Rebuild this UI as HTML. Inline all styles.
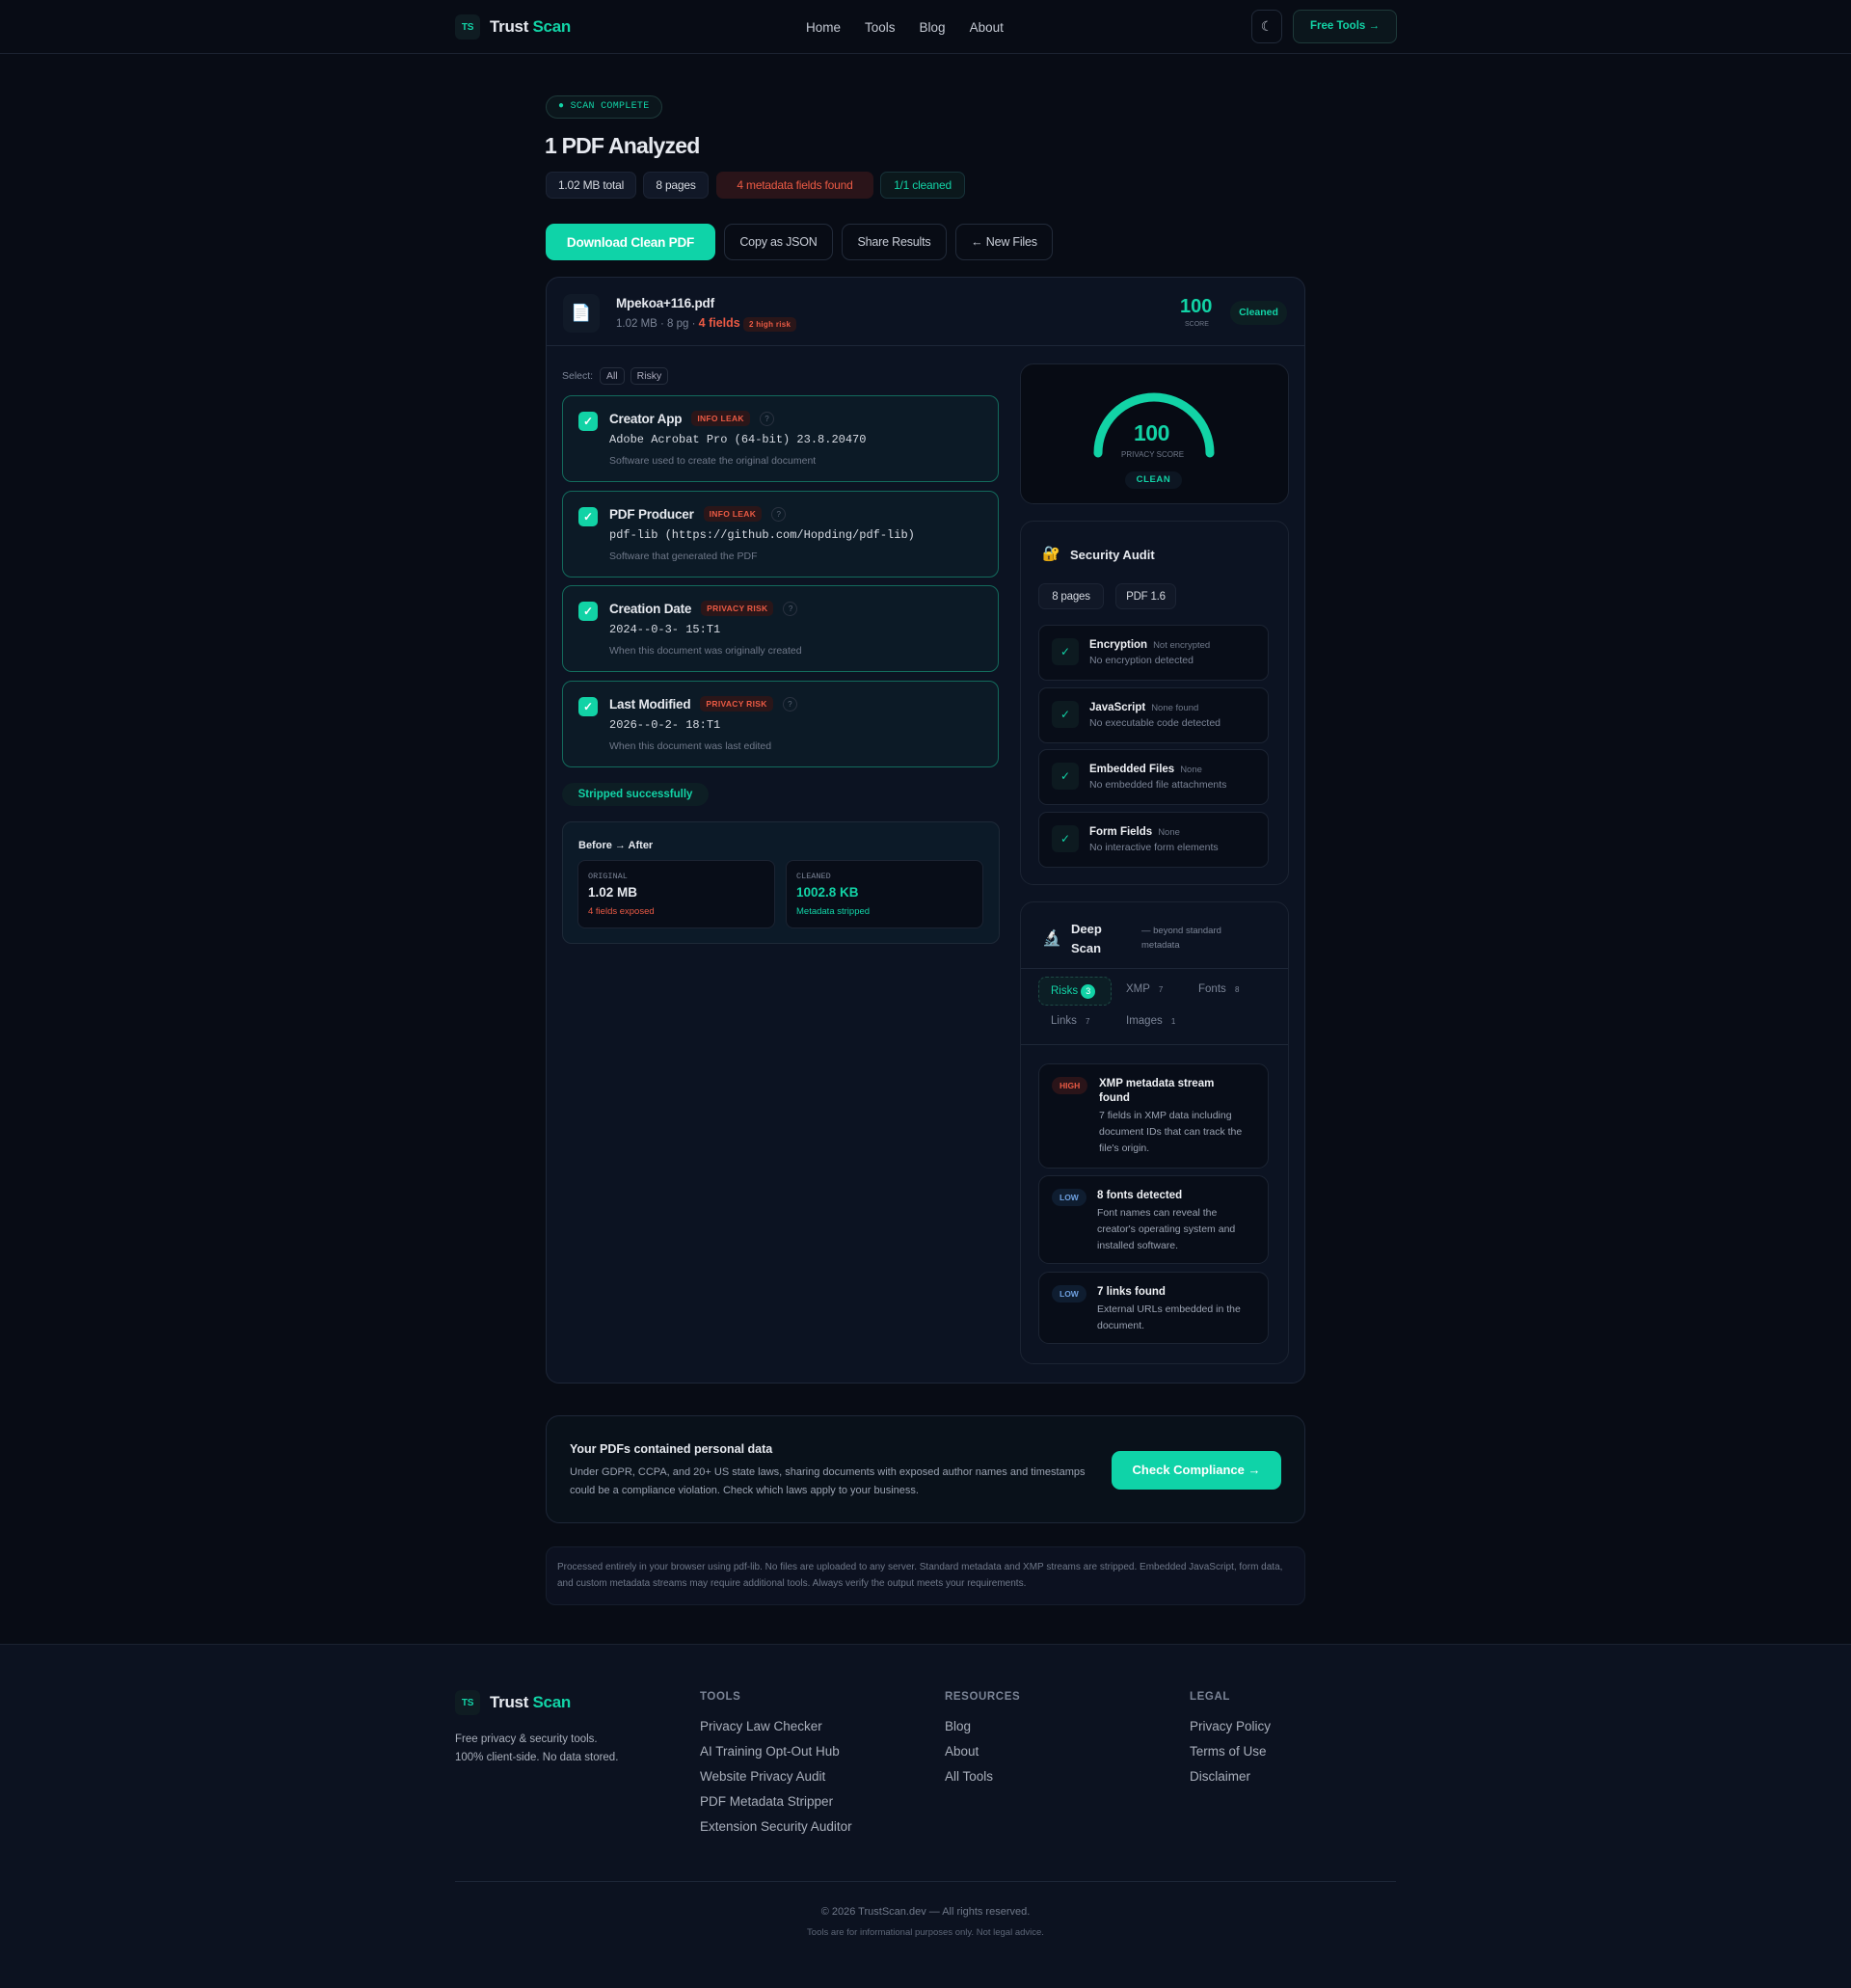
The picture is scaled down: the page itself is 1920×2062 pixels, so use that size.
<!DOCTYPE html>
<html><head><meta charset="utf-8">
<style>
*{box-sizing:border-box;margin:0;padding:0}
body{width:1920px;height:2062px;background:#080c15;font-family:"Liberation Sans",sans-serif;color:#e6e9ef;position:relative;overflow:hidden}
.a{position:absolute}
.g{color:#12d3a6}.r{color:#ea5a44}.m{color:#7b8496}
.mono{font-family:"Liberation Mono",monospace}
.hdr{left:0;top:0;width:1920px;height:56px;border-bottom:1px solid #1b2230}
.logo{display:flex;align-items:center;gap:10px;font-weight:700;font-size:17px;letter-spacing:-.3px}
.ts{width:26px;height:26px;border-radius:6px;background:#0f1c22;color:#12d3a6;font-size:10px;display:flex;align-items:center;justify-content:center;font-weight:700}
.nav a{color:#c3c8d2;font-size:13.5px;margin-right:25px;text-decoration:none}
.chip{position:absolute;height:28px;border-radius:7px;background:#111827;border:1px solid #1c2434;font-size:12px;display:flex;align-items:center;justify-content:center;color:#d5d9e0;letter-spacing:-.2px}
.btn{position:absolute;height:38px;border-radius:9px;border:1px solid #222b3a;font-size:12.5px;display:flex;align-items:center;justify-content:center;color:#c9ced8;letter-spacing:-.2px}
.card{position:absolute;background:#0c1322;border:1px solid #1e2738;border-radius:14px}
.fc{position:absolute;left:583px;width:453px;height:90px;border:1px solid #136a5c;border-radius:10px;background:#0c1a26}
.cb{position:absolute;left:16px;top:16px;width:20px;height:20px;border-radius:5px;background:#12d3a6;color:#fff;font-size:12px;text-align:center;line-height:20px;font-weight:700}
.ft{position:absolute;left:48px;top:15px;font-weight:700;font-size:13.5px;display:flex;align-items:center;gap:10px;letter-spacing:-.2px}
.tag{font-size:8.5px;font-weight:700;color:#ea5a44;background:#2a1619;border-radius:5px;padding:3px 6px;letter-spacing:.3px}
.q{width:15px;height:15px;border-radius:50%;border:1px solid #2a3240;font-size:8px;color:#5b6475;text-align:center;line-height:13px;font-weight:400}
.fv{position:absolute;left:48px;top:38px;font-family:"Liberation Mono",monospace;font-size:12px;color:#d6dae2}
.fd{position:absolute;left:48px;top:61px;font-size:10.5px;color:#6f7889}
.ai{position:absolute;left:1077px;width:239px;height:58px;border:1px solid #1c2433;border-radius:9px;background:#080d18}
.ai .ck{position:absolute;left:13px;top:13px;width:28px;height:28px;border-radius:6px;background:#0d1a20;color:#12d3a6;font-size:12px;text-align:center;line-height:28px}
.ai .t{position:absolute;left:52px;top:14px;font-size:11.5px;font-weight:700;color:#eef0f4}
.ai .t span{font-weight:400;font-size:9.5px;color:#6f7889;margin-left:6px}
.ai .d{position:absolute;left:52px;top:30px;font-size:10.5px;color:#7b8496}
.ri{position:absolute;left:1077px;width:239px;border:1px solid #1c2433;border-radius:11px;background:#080d18}
.lv{position:absolute;left:13px;top:13px;font-size:8.5px;font-weight:700;border-radius:9px;padding:4px 8px}
.ri .t{position:absolute;left:62px;top:13px;width:160px;font-size:11.5px;font-weight:700;line-height:15px;color:#eef0f4}
.ri .d{font-weight:400;font-size:10.5px;line-height:17px;color:#9aa2b1;display:block;margin-top:2px}
.fh{position:absolute;top:1754px;font-size:11.5px;font-weight:700;color:#7b8496;letter-spacing:.6px}
.fl{position:absolute;font-size:13.5px;color:#a9afbb}
</style></head><body>

<div class="a hdr"></div>
<div class="a logo" style="left:472px;top:15px"><div class="ts">TS</div><span>Trust <span class="g">Scan</span></span></div>
<div class="a nav" style="left:836px;top:20px"><a>Home</a><a>Tools</a><a>Blog</a><a>About</a></div>
<div class="a" style="left:1298px;top:10px;width:32px;height:35px;border:1px solid #222b3a;border-radius:8px;color:#c3c8d2;font-size:14px;text-align:center;line-height:33px">☾</div>
<div class="a" style="left:1341px;top:10px;width:108px;height:35px;border:1px solid #1e3a3a;border-radius:8px;background:#0b161c;color:#12d3a6;font-size:11.5px;font-weight:700;text-align:center;line-height:33px">Free Tools →</div>

<div class="a mono" style="left:566px;top:99px;height:24px;border:1px solid #1e3a3a;border-radius:12px;background:#0b161c;color:#12d3a6;font-size:10px;padding:0 12px;line-height:22px;letter-spacing:.3px">● SCAN COMPLETE</div>
<div class="a" style="left:565px;top:138px;font-size:23px;font-weight:700;letter-spacing:-.8px">1 PDF Analyzed</div>
<div class="chip" style="left:566px;top:178px;width:94px">1.02 MB total</div>
<div class="chip" style="left:667px;top:178px;width:68px">8 pages</div>
<div class="chip" style="left:743px;top:178px;width:163px;background:#2a1419;border-color:#2a1419;color:#ea5a44">4 metadata fields found</div>
<div class="chip" style="left:913px;top:178px;width:88px;background:#0b181c;border-color:#17333a;color:#12d3a6">1/1 cleaned</div>

<div class="btn" style="left:566px;top:232px;width:176px;background:#0fd3a8;border-color:#0fd3a8;color:#fff;font-weight:700;font-size:13.5px">Download Clean PDF</div>
<div class="btn" style="left:751px;top:232px;width:113px">Copy as JSON</div>
<div class="btn" style="left:873px;top:232px;width:109px">Share Results</div>
<div class="btn" style="left:991px;top:232px;width:101px">← New Files</div>

<div class="card" style="left:566px;top:287px;width:788px;height:1148px"></div>
<div class="a" style="left:567px;top:358px;width:786px;height:1px;background:#1e2738"></div>
<div class="a" style="left:584px;top:305px;width:38px;height:40px;border-radius:8px;background:#111a28;text-align:center;line-height:40px;font-size:17px;color:#ddd">📄</div>
<div class="a" style="left:639px;top:307px;font-size:13.5px;font-weight:700;letter-spacing:-.2px">Mpekoa+116.pdf</div>
<div class="a m" style="left:639px;top:328px;font-size:11.5px">1.02 MB · 8 pg · <span class="r" style="font-weight:700;font-size:12.5px">4 fields</span> <span class="tag" style="font-size:8px">2 high risk</span></div>
<div class="a g" style="left:1224px;top:307px;font-size:20px;font-weight:700">100</div>
<div class="a" style="left:1229px;top:333px;font-size:7px;color:#6f7889">SCORE</div>
<div class="a" style="left:1276px;top:312px;width:59px;height:25px;border-radius:12px;background:#0d1e22;color:#12d3a6;font-size:10.5px;font-weight:700;text-align:center;line-height:25px">Cleaned</div>

<div class="a m" style="left:583px;top:381px;font-size:10.5px">Select: <span style="display:inline-block;border:1px solid #262e3d;border-radius:5px;padding:2px 6px;margin-left:4px;color:#aab">All</span> <span style="display:inline-block;border:1px solid #262e3d;border-radius:5px;padding:2px 6px;margin-left:3px;color:#aab">Risky</span></div>

<div class="fc" style="top:410px"><div class="cb">✓</div><div class="ft">Creator App <span class="tag">INFO LEAK</span><span class="q">?</span></div><div class="fv">Adobe Acrobat Pro (64-bit) 23.8.20470</div><div class="fd">Software used to create the original document</div></div>
<div class="fc" style="top:509px"><div class="cb">✓</div><div class="ft">PDF Producer <span class="tag">INFO LEAK</span><span class="q">?</span></div><div class="fv">pdf-lib (https://github.com/Hopding/pdf-lib)</div><div class="fd">Software that generated the PDF</div></div>
<div class="fc" style="top:607px"><div class="cb">✓</div><div class="ft">Creation Date <span class="tag">PRIVACY RISK</span><span class="q">?</span></div><div class="fv">2024--0-3- 15:T1</div><div class="fd">When this document was originally created</div></div>
<div class="fc" style="top:706px"><div class="cb">✓</div><div class="ft">Last Modified <span class="tag">PRIVACY RISK</span><span class="q">?</span></div><div class="fv">2026--0-2- 18:T1</div><div class="fd">When this document was last edited</div></div>

<div class="a g" style="left:583px;top:812px;width:152px;height:24px;border-radius:12px;background:#0d1e24;font-size:11.5px;font-weight:700;text-align:center;line-height:24px">Stripped successfully</div>
<div class="a" style="left:583px;top:852px;width:454px;height:127px;border:1px solid #1e2a38;border-radius:10px;background:#0c1a28"></div>
<div class="a" style="left:600px;top:871px;font-size:11px;font-weight:700">Before → After</div>
<div class="a" style="left:599px;top:892px;width:205px;height:71px;border:1px solid #1c2433;border-radius:8px;background:#080d18"></div>
<div class="a" style="left:815px;top:892px;width:205px;height:71px;border:1px solid #1c2433;border-radius:8px;background:#080d18"></div>
<div class="a mono m" style="left:610px;top:904px;font-size:8.5px">ORIGINAL</div>
<div class="a" style="left:610px;top:918px;font-size:13.5px;font-weight:700">1.02 MB</div>
<div class="a r" style="left:610px;top:940px;font-size:9.5px">4 fields exposed</div>
<div class="a mono m" style="left:826px;top:904px;font-size:8.5px">CLEANED</div>
<div class="a g" style="left:826px;top:918px;font-size:13.5px;font-weight:700">1002.8 KB</div>
<div class="a g" style="left:826px;top:940px;font-size:9.5px">Metadata stripped</div>

<div class="a" style="left:1058px;top:377px;width:279px;height:146px;border:1px solid #1c2433;border-radius:14px;background:#070b14"></div>
<svg class="a" style="left:1130px;top:405px" width="134" height="72" viewBox="0 0 134 72"><path d="M9 65 A58 58 0 0 1 125 65" fill="none" stroke="#12d3a6" stroke-width="9" stroke-linecap="round"/></svg>
<div class="a g" style="left:1176px;top:436px;font-size:23px;font-weight:700;letter-spacing:-.5px">100</div>
<div class="a" style="left:1163px;top:467px;font-size:8px;color:#6f7889">PRIVACY SCORE</div>
<div class="a g" style="left:1167px;top:489px;width:59px;height:18px;border-radius:9px;background:#0d1622;font-size:9.5px;font-weight:700;text-align:center;line-height:18px;letter-spacing:.6px">CLEAN</div>

<div class="a" style="left:1058px;top:540px;width:279px;height:378px;border:1px solid #1c2433;border-radius:14px;background:#0c1322"></div>
<div class="a" style="left:1081px;top:565px;font-size:15px">🔐</div>
<div class="a" style="left:1110px;top:568px;font-size:13px;font-weight:700">Security Audit</div>
<div class="chip" style="left:1077px;top:605px;height:27px;width:68px;font-size:11.5px">8 pages</div>
<div class="chip" style="left:1157px;top:605px;height:27px;width:63px;font-size:11.5px">PDF 1.6</div>
<div class="ai" style="top:648px"><div class="ck">✓</div><div class="t">Encryption<span>Not encrypted</span></div><div class="d">No encryption detected</div></div>
<div class="ai" style="top:713px"><div class="ck">✓</div><div class="t">JavaScript<span>None found</span></div><div class="d">No executable code detected</div></div>
<div class="ai" style="top:777px"><div class="ck">✓</div><div class="t">Embedded Files<span>None</span></div><div class="d">No embedded file attachments</div></div>
<div class="ai" style="top:842px"><div class="ck">✓</div><div class="t">Form Fields<span>None</span></div><div class="d">No interactive form elements</div></div>

<div class="a" style="left:1058px;top:935px;width:279px;height:480px;border:1px solid #1c2433;border-radius:14px;background:#0c1322"></div>
<div class="a" style="left:1081px;top:963px;font-size:16px">🔬</div>
<div class="a" style="left:1111px;top:954px;font-size:13px;font-weight:700;line-height:20px">Deep<br>Scan</div>
<div class="a m" style="left:1184px;top:958px;font-size:9.5px;line-height:15px">— beyond standard<br>metadata</div>
<div class="a" style="left:1059px;top:1004px;width:277px;height:1px;background:#1e2738"></div>
<div class="a g" style="left:1077px;top:1013px;width:76px;height:30px;border:1px dashed #1e4a45;border-radius:8px;background:#0c1e25;font-size:11.5px;line-height:28px;padding-left:12px">Risks <span style="display:inline-block;width:15px;height:15px;border-radius:50%;background:#12d3a6;color:#fff;font-size:9px;text-align:center;line-height:15px">3</span></div>
<div class="a m" style="left:1168px;top:1020px;font-size:11.5px">XMP <span style="font-size:8px;margin-left:6px">7</span></div>
<div class="a m" style="left:1243px;top:1020px;font-size:11.5px">Fonts <span style="font-size:8px;margin-left:6px">8</span></div>
<div class="a m" style="left:1090px;top:1053px;font-size:11.5px">Links <span style="font-size:8px;margin-left:6px">7</span></div>
<div class="a m" style="left:1168px;top:1053px;font-size:11.5px">Images <span style="font-size:8px;margin-left:6px">1</span></div>
<div class="a" style="left:1059px;top:1083px;width:277px;height:1px;background:#1e2738"></div>
<div class="ri" style="top:1103px;height:109px"><div class="lv" style="color:#ea5a44;background:#2a1419">HIGH</div><div class="t" style="width:150px">XMP metadata stream found<span class="d">7 fields in XMP data including document IDs that can track the file's origin.</span></div></div>
<div class="ri" style="top:1219px;height:92px"><div class="lv" style="color:#6ea0e0;background:#0f1d30">LOW</div><div class="t" style="left:60px">8 fonts detected<span class="d">Font names can reveal the creator's operating system and installed software.</span></div></div>
<div class="ri" style="top:1319px;height:75px"><div class="lv" style="color:#6ea0e0;background:#0f1d30">LOW</div><div class="t" style="left:60px">7 links found<span class="d">External URLs embedded in the document.</span></div></div>

<div class="a" style="left:566px;top:1468px;width:788px;height:112px;border:1px solid #1e2738;border-radius:14px;background:#09111a"></div>
<div class="a" style="left:591px;top:1496px;font-size:12.5px;font-weight:700">Your PDFs contained personal data</div>
<div class="a" style="left:591px;top:1518px;font-size:11px;line-height:19px;color:#9aa2b1;width:540px">Under GDPR, CCPA, and 20+ US state laws, sharing documents with exposed author names and timestamps could be a compliance violation. Check which laws apply to your business.</div>
<div class="a" style="left:1153px;top:1505px;width:176px;height:40px;border-radius:9px;background:#0fd3a8;color:#fff;font-size:13px;font-weight:700;text-align:center;line-height:40px">Check Compliance →</div>

<div class="a" style="left:566px;top:1604px;width:788px;height:61px;border:1px solid #161e2d;border-radius:10px;background:#0c1120"></div>
<div class="a" style="left:578px;top:1617px;width:760px;font-size:10px;line-height:17px;color:#6f7889">Processed entirely in your browser using pdf-lib. No files are uploaded to any server. Standard metadata and XMP streams are stripped. Embedded JavaScript, form data, and custom metadata streams may require additional tools. Always verify the output meets your requirements.</div>

<div class="a" style="left:0;top:1705px;width:1920px;height:357px;background:#0c1220;border-top:1px solid #1b2230"></div>
<div class="a logo" style="left:472px;top:1753px"><div class="ts">TS</div><span>Trust <span class="g">Scan</span></span></div>
<div class="a" style="left:472px;top:1795px;font-size:11.5px;line-height:19px;color:#a9afbb">Free privacy &amp; security tools.<br>100% client-side. No data stored.</div>
<div class="fh" style="left:726px">TOOLS</div>
<div class="fh" style="left:980px">RESOURCES</div>
<div class="fh" style="left:1234px">LEGAL</div>
<div class="fl" style="left:726px;top:1783px">Privacy Law Checker</div>
<div class="fl" style="left:726px;top:1809px">AI Training Opt-Out Hub</div>
<div class="fl" style="left:726px;top:1835px">Website Privacy Audit</div>
<div class="fl" style="left:726px;top:1861px">PDF Metadata Stripper</div>
<div class="fl" style="left:726px;top:1887px">Extension Security Auditor</div>
<div class="fl" style="left:980px;top:1783px">Blog</div>
<div class="fl" style="left:980px;top:1809px">About</div>
<div class="fl" style="left:980px;top:1835px">All Tools</div>
<div class="fl" style="left:1234px;top:1783px">Privacy Policy</div>
<div class="fl" style="left:1234px;top:1809px">Terms of Use</div>
<div class="fl" style="left:1234px;top:1835px">Disclaimer</div>
<div class="a" style="left:472px;top:1951px;width:976px;height:1px;background:#1e2738"></div>
<div class="a" style="left:0;top:1977px;width:1920px;text-align:center;font-size:11px;color:#6f7889">© 2026 TrustScan.dev — All rights reserved.</div>
<div class="a" style="left:0;top:1999px;width:1920px;text-align:center;font-size:9.5px;color:#5d6677">Tools are for informational purposes only. Not legal advice.</div>
</body></html>
